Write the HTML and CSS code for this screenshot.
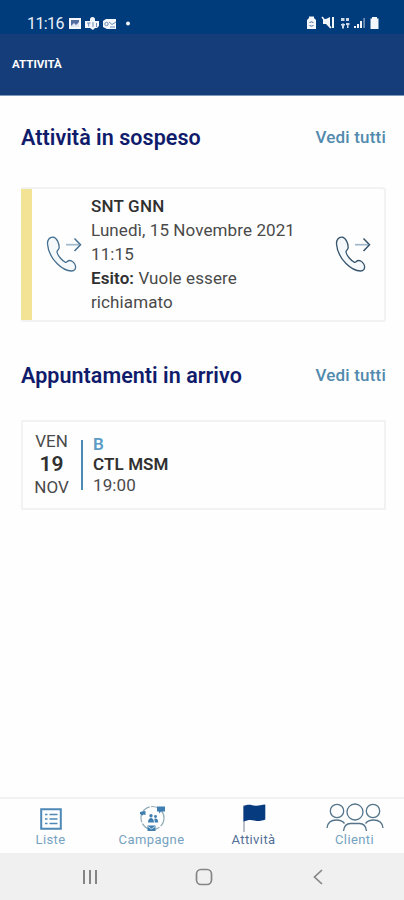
FILE: index.html
```html
<!DOCTYPE html>
<html lang="it">
<head>
<meta charset="utf-8">
<title>Attività</title>
<link rel="stylesheet" href="styles.css">
</head>
<body>
<svg class="defs" aria-hidden="true">
  <symbol id="call" viewBox="0 0 36 36">
    <path d="M7 1.200C3.500 1 1.300 4 1.500 8c.5 7 4 14 9.500 19.500 5 5 10 7.500 14.500 7.500 3 0 4.500-2 4-5-.5-3-3.500-5.500-6-5.500-2 0-2.500 2.300-4 1.800-3-1-8-7-8.500-10.300-.2-1.700 2.100-2 2.200-4.500C13.300 8 11 1.400 7 1.200z" fill="#f6f9fb" stroke="currentColor" stroke-width="1.300"/>
    <path d="M20 8.700h13" fill="none" stroke="#9db9cb" stroke-width="1.700"/>
    <path d="M28.500 2.500l6 6.200-6 6.200" fill="none" stroke="currentColor" stroke-width="1.500"/>
  </symbol>
</svg>
<div class="screen">
  <header>
    <div class="status">
      <span class="clock">11:16</span>
      <svg class="notices" viewBox="0 0 64 14">
        <path d="M1 1h12v11H1z" fill="#f3f6fa"/><path d="M3 3h8v7H3z" fill="#536da0"/><path d="M3 9l3-3 2 2 3-3v5H3z" fill="#dfe7f2"/>
        <path d="M17 4h5V2.500a2.500 2.500 0 0 1 5 0V4h4v5l-2 2h-2l-2 2-3-2h-5z" fill="#f3f6fa"/><path d="M19 6h3.500M20.700 6v3.500M25 5v5M28.500 6v4" stroke="#6e8cb9" fill="none"/>
        <path d="M38 2h10v10H39l-4-2V4z" fill="#f3f6fa"/><path d="M41 5l3 2.500L48 5M42 10h5" stroke="#6e8cb9" fill="none"/><circle cx="38.500" cy="7" r="1.700" fill="none" stroke="#6e8cb9"/>
        <circle cx="60" cy="6.500" r="2" fill="#f3f6fa"/>
      </svg>
      <svg class="signals" viewBox="0 0 74 16" fill="#f3f6fa">
        <path d="M1 5l2-2V1.500h5V3l2 2v9H1z"/><path d="M3.500 8a2.300 2.300 0 0 1 4 0M7.500 10a2.300 2.300 0 0 1-4 0" fill="none" stroke="#426398"/>
        <path d="M17 4h3l4-2v11l-4-4h-3zM26 2h2v11h-2z"/><path d="M16 2l9 11" stroke="#f3f6fa" stroke-width="1.500"/>
        <path d="M35 3h3.500v3H35zM40 3h3v3h-3zM36 8.500h2v5h-2zM35 9h4v1.500h-4zM40 8h3.500v2H40zM41 8h1.500v5H41z" opacity=".85"/>
        <path d="M48 11h2v2h-2zM51 9h2v4h-2zM54 6h2v7h-2z"/><path d="M57.500 3h1.200v10h-1.200z" opacity=".65"/>
        <path d="M66 2h5v1.500h1.500V14h-8V3.500H66z"/>
      </svg>
    </div>
    <h1>ATTIVITÀ</h1>
  </header>
  <main>
    <div class="heading"><h2>Attività in sospeso</h2><a>Vedi tutti</a></div>
    <article class="card task">
      <svg class="call left"><use href="#call"/></svg>
      <div class="details">
        <b class="name">SNT GNN</b>
        <span class="date">Lunedì, 15 Novembre 2021</span>
        <span>11:15</span>
        <span><b>Esito:</b> Vuole essere</span>
        <span>richiamato</span>
      </div>
      <svg class="call right"><use href="#call"/></svg>
    </article>
    <div class="heading second"><h2>Appuntamenti in arrivo</h2><a>Vedi tutti</a></div>
    <article class="card appointment">
      <div class="day"><span>VEN</span><b>19</b><span>NOV</span></div>
      <div class="meeting"><b class="type">B</b><b>CTL MSM</b><span>19:00</span></div>
    </article>
  </main>
  <nav class="tabs">
    <div class="tab"><svg class="list" width="22" height="22" viewBox="0 0 22 22" fill="none" stroke="#4d88b6"><path d="M1.200 1.200h19.600v19.600H1.200z" stroke-width="2"/><path d="M5 6.500h2.500M5 11h2.500M5 15.500h2.500M9.500 6.500h8M9.500 11h8M9.500 15.500h8" stroke-width="1.600"/></svg><span>Liste</span></div>
    <div class="tab"><svg width="28" height="28" viewBox="0 0 28 28"><circle cx="14.500" cy="14" r="11.500" fill="none" stroke="#8fabb4" stroke-width="1.200" stroke-dasharray="9 1.500"/><path d="M19 2.500h8v5h-4l-2 2v-2h-2zM2 8l5.500-1v4l-2-.5-1 1L2 10zM9.500 21.500h8V27h-8z" fill="#3f7eb0"/><circle cx="13" cy="11.800" r="1.700" fill="#3f7eb0"/><circle cx="17.500" cy="12.500" r="1.400" fill="#3f7eb0"/><path d="M10 18.500c0-6 6-6 6 0zM16.700 18.500c0-1.500 0-2.500-.5-3.500 2-1.300 4 0 4 3.500z" fill="#3f7eb0"/><path d="M10 22.500l3.500 2.500 3.500-2.500" fill="none" stroke="#c6dcea"/></svg><span>Campagne</span></div>
    <div class="tab active"><svg width="24" height="28" viewBox="0 0 24 28"><path d="M2 1v27" stroke="#a5acb5" stroke-width="1.500"/><path d="M1.500 2.500c5-3 8-1 12-.8 3 .2 6-.8 9.800-1.200v15c-4 1.500-7 2-11 1-4-1-6.800-.5-10.800 1z" fill="#063b80"/></svg><span>Attività</span></div>
    <div class="tab"><svg width="58" height="29" viewBox="0 0 58 29" fill="none" stroke="#53748a" stroke-width="1.300"><circle cx="11" cy="8" r="6.700"/><circle cx="29" cy="9" r="8"/><circle cx="47" cy="8" r="6.700"/><path d="M1 25c.5-5 4-8 9.500-8 4 0 6 1 8 3.500M57 25c-.5-5-4-8-9.500-8-4 0-6 1-8 3.500M17.500 28c.5-4.500 2.500-7.500 7-7.500h9c4.500 0 6.500 3 7 7.500"/></svg><span>Clienti</span></div>
  </nav>
  <footer>
    <svg width="16" height="16" viewBox="0 0 16 16" stroke="#858585" stroke-width="2"><path d="M2 1v14M8 1v14M14 1v14"/></svg>
    <svg width="18" height="18" viewBox="0 0 18 18" fill="none" stroke="#858585" stroke-width="1.700"><rect x="1.500" y="1.500" width="15" height="15" rx="4.500"/></svg>
    <svg width="12" height="16" viewBox="0 0 12 16" fill="none" stroke="#858585" stroke-width="1.700"><path d="M10 1L2.500 8l7.500 7"/></svg>
  </footer>
</div>
</body>
</html>
```
FILE: styles.css
```css
* { box-sizing: border-box; }
body { margin: 0; background: #fefefe; font-family: Roboto, "Liberation Sans", sans-serif; color: #4a4a4a; }
.defs { display: none; }
.screen { width: 404px; height: 900px; display: flex; flex-direction: column; }
header { height: 96px; background: #153d7a; color: #fff; border-bottom: 1px solid #7d9abb; flex: none; }
.status { height: 34px; background: #003b7b; display: flex; align-items: flex-start; padding: 14px 0 0 27px; }
.clock { font-size: 16px; line-height: 20px; width: 41px; white-space: nowrap; color: #e9f0f8; letter-spacing: -.6px; }
.notices { width: 64px; height: 14px; margin-top: 3px; }
.signals { width: 74px; height: 16px; margin: 1px 0 0 174px; }
h1 { margin: 0; padding: 23px 0 0 12px; font-size: 11.500px; line-height: 15px; font-weight: 700; letter-spacing: 0; }
main { flex: 1; padding: 27px 18px 0 21px; }
.heading { height: 30px; display: flex; align-items: center; justify-content: space-between; }
h2 { margin: 0; font-size: 21.500px; line-height: 30px; font-weight: 600; letter-spacing: .05px; color: #101c6b; white-space: nowrap; }
.heading a { font-size: 17px; line-height: 20px; font-weight: 500; letter-spacing: .2px; color: #528aae; white-space: nowrap; padding-bottom: 2px; }
.card { border: 2px solid #f2f2f2; border-radius: 3px; background: #fefefe; display: flex; }
.task { height: 135px; margin-top: 34px; border-left: 0; border-radius: 1px 4px 2px 1px; }
.task::before { content: ""; width: 11px; background: #f3e394; }
.call { width: 36px; height: 36px; color: #456f90; flex: none; }
.left { margin: 47px 0 0 14px; }
.right { margin: 47px 13px 0 auto; color: #36536c; }
.details { display: flex; flex-direction: column; margin: 5px 0 0 9px; font-size: 17px; line-height: 24px; letter-spacing: .1px; white-space: nowrap; }
.details b, .meeting b { color: #303030; font-weight: 600; }
.details .name { font-weight: 500; letter-spacing: .2px; }
.second { margin-top: 39px; }
.appointment { height: 90px; margin-top: 29px; border-radius: 1px; }
.day { width: 58px; display: flex; flex-direction: column; align-items: center; padding: 8px 1px 0 0; font-size: 17px; line-height: 23px; }
.day b { font-size: 21px; font-weight: 600; color: #303030; }
.meeting { height: 50px; margin: 18px 0 0; padding: 0 0 1px 10px; border-left: 2px solid #4b8db7; display: flex; flex-direction: column; justify-content: center; font-size: 17px; line-height: 20.500px; letter-spacing: .1px; }
.meeting .type { color: #5b9bc5; }
.tabs { height: 56px; border-top: 2px solid #f0f1f2; display: grid; grid-template-columns: repeat(4, 101px); }
.tab { display: flex; flex-direction: column; align-items: center; justify-content: flex-end; padding-bottom: 5px; font-size: 13px; line-height: 16px; letter-spacing: .4px; color: #76a2c1; }
.tab:nth-child(n+3) { padding-left: 2px; }
.tab svg { flex: none; }
.tab .list { margin-bottom: 2px; }
.tab.active { color: #526f97; }
footer { height: 47px; background: #f0f0f0; display: grid; grid-template-columns: 114px 114px 114px; justify-content: center; justify-items: center; align-items: center; padding: 1px 0 0 4px; }
```
